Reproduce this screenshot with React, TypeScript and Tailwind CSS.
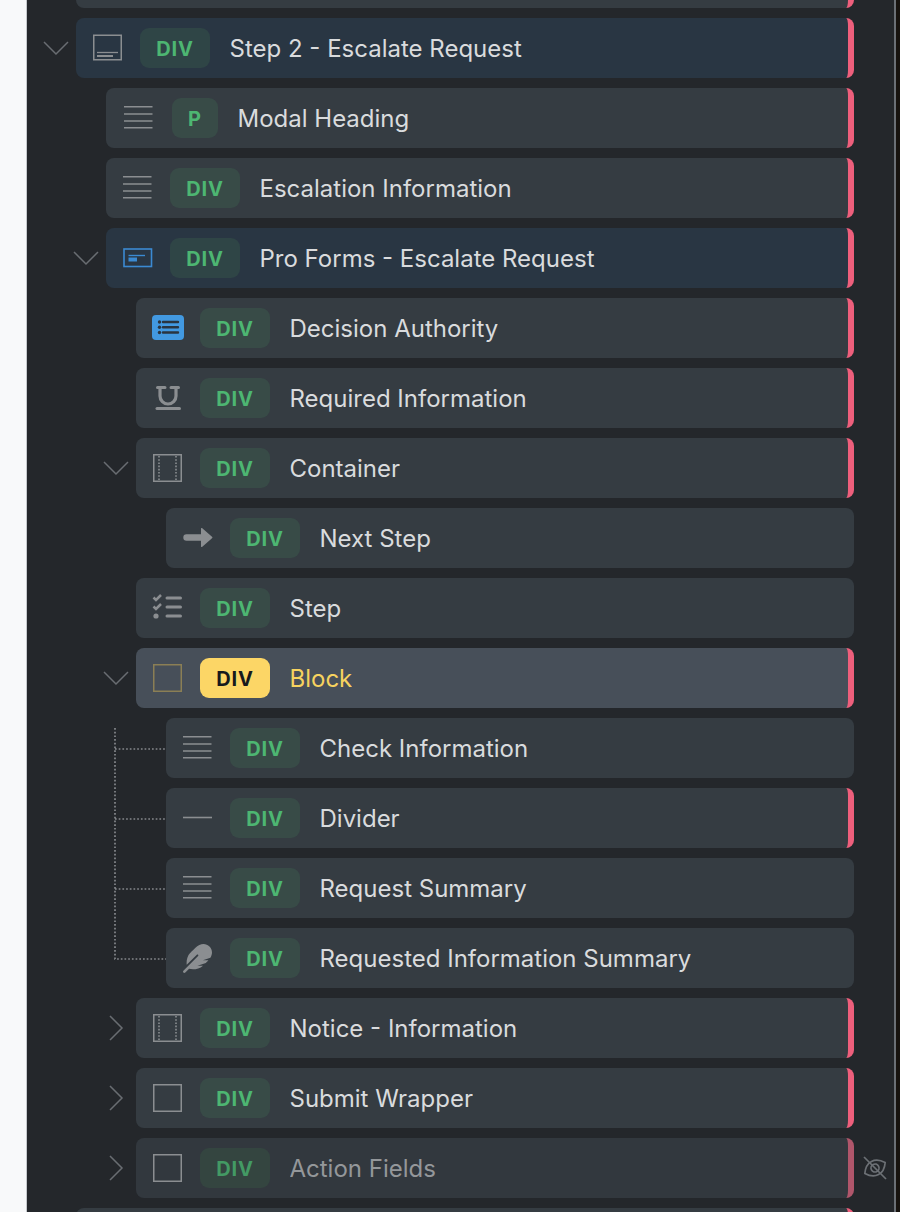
import type { ReactNode } from 'react';
import { FaFeather } from 'react-icons/fa';

type IconName =
  | 'section' | 'lines' | 'form' | 'list' | 'underline' | 'film'
  | 'arrow' | 'steps' | 'box' | 'boxActive' | 'divider' | 'feather' | 'none';

interface RowData {
  depth: number;
  label: string;
  icon: IconName;
  tag?: string;
  toggle?: 'open' | 'closed';
  tone?: 'plain' | 'blue' | 'active' | 'hidden';
  pink?: boolean;
}

const GRAY = '#8b8e91';

function Glyph({ children }: { children: ReactNode }) {
  return (
    <svg width="32" height="32" viewBox="0 0 32 32" fill="none" stroke={GRAY} className="-mx-[2px] shrink-0 overflow-visible">
      {children}
    </svg>
  );
}

function RowIcon({ name }: { name: IconName }) {
  switch (name) {
    case 'section':
      return (
        <Glyph>
          <rect x="2.75" y="3.25" width="27.5" height="24.5" strokeWidth="1.5" />
          <path d="M6 20.5h21" strokeWidth="1.3" />
          <path d="M6 24h16" strokeWidth="2" />
        </Glyph>
      );
    case 'lines':
      return (
        <Glyph>
          <path d="M2 4.7h28.5M2 12h28.5M2 19h28.5M2 25.7h28.5" strokeWidth="1.6" />
        </Glyph>
      );
    case 'form':
      return (
        <Glyph>
          <rect x="3" y="7" width="27.5" height="17.5" stroke="#3b8ad2" strokeWidth="1.6" />
          <path d="M7.5 13.5H24" stroke="#3b8ad2" strokeWidth="1.4" />
          <rect x="7.5" y="15.5" width="8.5" height="4" fill="#3b8ad2" stroke="none" />
        </Glyph>
      );
    case 'list':
      return (
        <Glyph>
          <rect x="1" y="3" width="32" height="25" rx="4" fill="#4299e1" stroke="none" />
          <path d="M12 10h15M12 15.2h15M12 20.5h15" stroke="#2a3540" strokeWidth="2.4" strokeLinecap="round" />
          <circle cx="8.5" cy="10" r="1.7" fill="#2a3540" stroke="none" />
          <circle cx="8.5" cy="15.2" r="1.7" fill="#2a3540" stroke="none" />
          <circle cx="8.5" cy="20.5" r="1.7" fill="#2a3540" stroke="none" />
        </Glyph>
      );
    case 'underline':
      return (
        <Glyph>
          <path d="M6.5 5.5H14M20 5.5h7.5" strokeWidth="3" strokeLinecap="round" />
          <path d="M9 5.5V14a8 8 0 0 0 16 0V5.5" strokeWidth="3.2" />
          <path d="M6 26.5h22.5" strokeWidth="3" strokeLinecap="round" />
        </Glyph>
      );
    case 'film':
      return (
        <Glyph>
          <rect x="2.75" y="2.75" width="27.5" height="26.5" strokeWidth="1.5" />
          <path d="M8 4v24.5M25 4v24.5" strokeWidth="1.6" strokeDasharray="1.6 1.6" />
        </Glyph>
      );
    case 'arrow':
      return (
        <Glyph>
          <path d="M5.5 12.3H20V6.5a.6.6 0 0 1 1-.4l10 8.6a1 1 0 0 1 0 1.6l-10 8.6a.6.6 0 0 1-1-.4v-5.8H5.5a3.2 3.2 0 0 1 0-6.4z" fill={GRAY} stroke="none" />
        </Glyph>
      );
    case 'steps':
      return (
        <Glyph>
          <path d="M2.5 5.5L5 8l5-5M2.5 14.5L5 17l5-5" strokeWidth="2.5" />
          <circle cx="5" cy="24" r="2.6" fill={GRAY} stroke="none" />
          <path d="M16 6h13.5M16 15h13.5M16 24h13.5" strokeWidth="3" strokeLinecap="round" />
        </Glyph>
      );
    case 'box':
      return (
        <Glyph>
          <rect x="2.75" y="2.75" width="27.5" height="26.5" strokeWidth="1.5" />
        </Glyph>
      );
    case 'boxActive':
      return (
        <Glyph>
          <rect x="2.75" y="2.75" width="27.5" height="26.5" stroke="#8b7f55" strokeWidth="1.5" />
        </Glyph>
      );
    case 'divider':
      return (
        <Glyph>
          <path d="M2 15.5h29" strokeWidth="1.6" />
        </Glyph>
      );
    case 'feather':
      return (
        <span className="-mx-[2px] flex h-[32px] w-[32px] shrink-0 items-center justify-center text-[#8b8e91]">
          <FaFeather size={29} />
        </span>
      );
    default:
      return <span className="w-[28px] shrink-0" />;
  }
}

function Toggle({ state }: { state?: 'open' | 'closed' }) {
  if (!state) return null;
  return (
    <svg width="26" height="26" viewBox="0 0 26 26" fill="none" stroke="#696d72" strokeWidth="1.5">
      {state === 'open' ? <path d="M1 7l12 12L25 7" /> : <path d="M7 1l12 12L7 25" />}
    </svg>
  );
}

function EyeOff() {
  return (
    <svg width="26" height="26" viewBox="0 0 26 26" fill="none" stroke="#6c7075" strokeWidth="1.7">
      <g transform="rotate(-28 13 13)">
        <path d="M1.5 13C5 7.5 9 5.5 13 5.5S21 7.5 24.5 13C21 18.5 17 20.5 13 20.5S5 18.5 1.5 13z" />
        <circle cx="13" cy="13" r="4" />
      </g>
      <path d="M2 2l22 22" />
    </svg>
  );
}

function TreeRow({ depth, label, icon, tag = 'DIV', toggle, tone = 'plain', pink = true }: RowData) {
  const cardBg = {
    plain: 'bg-[#353c42]',
    blue: 'bg-[#293643]',
    active: 'bg-[#474f59]',
    hidden: 'bg-[#32383e]',
  }[tone];
  const bar = tone === 'hidden' ? 'border-r-[#b0566b]' : 'border-r-[#ee5f7c]';
  const badge =
    tone === 'active'
      ? 'bg-[#fcd666] text-[#17191c]'
      : tone === 'hidden'
        ? 'bg-[#344540] text-[#439a64]'
        : tone === 'blue'
          ? 'bg-[#2f4546] text-[#4db672]'
          : 'bg-[#384b47] text-[#4db672]';
  const text =
    tone === 'active' ? 'text-[#f7d35f]' : tone === 'hidden' ? 'text-[#94979a]' : 'text-[#d9dbdd]';
  const isShortTag = tag.length === 1;

  return (
    <div className="flex h-[60px] shrink-0 items-center">
      <div className="flex h-full shrink-0">
        {Array.from({ length: depth }).map((_, i) => (
          <span key={i} className="w-[30px]" />
        ))}
        <div className="flex w-[40px] items-center justify-center">
          <Toggle state={toggle} />
        </div>
      </div>
      <div
        className={`flex h-full min-w-0 flex-1 items-center rounded-lg ${cardBg} ${
          pink ? `border-r-[6px] ${bar}` : ''
        } ${isShortTag ? 'pl-[18px]' : 'pl-[17px]'}`}
      >
        <RowIcon name={icon} />
        {tag && (
          <span
            className={`flex h-[40px] items-center justify-center rounded-[9px] pt-[2px] text-[20px] font-bold tracking-[0.8px] ${badge} ${
              isShortTag ? 'ml-[20px] w-[46px]' : 'ml-[19px] w-[70px]'
            }`}
          >
            {tag}
          </span>
        )}
        {label && <span className={`ml-[19.5px] truncate pt-[2px] text-[24px] ${text}`}>{label}</span>}
      </div>
      <div className="flex w-[40px] shrink-0 items-center justify-center pl-[1px]">
        {tone === 'hidden' && <EyeOff />}
      </div>
    </div>
  );
}

const before: RowData[] = [
  { depth: 0, label: '', icon: 'none', tag: '' },
  { depth: 0, label: 'Step 2 - Escalate Request', icon: 'section', toggle: 'open', tone: 'blue' },
  { depth: 1, label: 'Modal Heading', icon: 'lines', tag: 'P' },
  { depth: 1, label: 'Escalation Information', icon: 'lines' },
  { depth: 1, label: 'Pro Forms - Escalate Request', icon: 'form', toggle: 'open', tone: 'blue' },
  { depth: 2, label: 'Decision Authority', icon: 'list' },
  { depth: 2, label: 'Required Information', icon: 'underline' },
  { depth: 2, label: 'Container', icon: 'film', toggle: 'open' },
  { depth: 3, label: 'Next Step', icon: 'arrow', pink: false },
  { depth: 2, label: 'Step', icon: 'steps', pink: false },
  { depth: 2, label: 'Block', icon: 'boxActive', toggle: 'open', tone: 'active' },
];

const nested: RowData[] = [
  { depth: 3, label: 'Check Information', icon: 'lines', pink: false },
  { depth: 3, label: 'Divider', icon: 'divider' },
  { depth: 3, label: 'Request Summary', icon: 'lines', pink: false },
  { depth: 3, label: 'Requested Information Summary', icon: 'feather', pink: false },
];

const after: RowData[] = [
  { depth: 2, label: 'Notice - Information', icon: 'film', toggle: 'closed' },
  { depth: 2, label: 'Submit Wrapper', icon: 'box', toggle: 'closed' },
  { depth: 2, label: 'Action Fields', icon: 'box', toggle: 'closed', tone: 'hidden' },
  { depth: 0, label: '', icon: 'none', tag: '' },
];

export default function App() {
  return (
    <div className="flex h-[1212px] w-[900px] overflow-hidden bg-[#f8f9fa] font-['Inter',sans-serif]">
      <div className="w-[26px] shrink-0" />
      <div className="flex min-w-0 flex-1 border-l border-r-2 border-l-[#c5c8cc] border-r-[#6b7076] bg-[#24272b]">
        <div className="-mt-[52px] flex w-[867px] shrink-0 flex-col gap-[10px] pl-[9px]">
          {before.map((row, i) => (
            <TreeRow key={i} {...row} />
          ))}
          <div className="relative flex flex-col gap-[10px]">
            <svg width="54" height="242" className="absolute left-[78px] top-[9px]" fill="none" stroke="#85888c" strokeWidth="1.7" strokeDasharray="1.7 2">
              <path d="M1 1v231h51M1 22h51M1 92h51M1 162h51" />
            </svg>
            {nested.map((row, i) => (
              <TreeRow key={i} {...row} />
            ))}
          </div>
          {after.map((row, i) => (
            <TreeRow key={i} {...row} />
          ))}
        </div>
      </div>
      <div className="w-[4px] shrink-0 bg-[#17130f]" />
    </div>
  );
}
